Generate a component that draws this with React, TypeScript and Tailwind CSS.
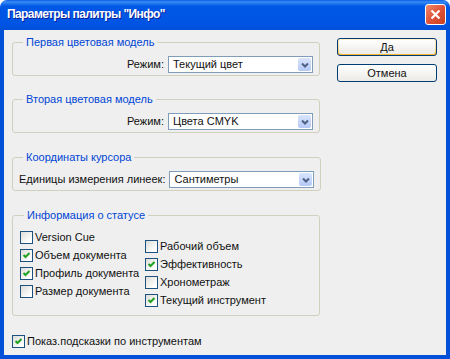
import React from "react";

// Small XP style checkbox
const Check: React.FC<{ checked?: boolean; label: string }> = ({ checked, label }) => (
  <div className="flex h-[18px] items-center gap-[2px] whitespace-nowrap">
    <div className="flex h-[13px] w-[13px] shrink-0 items-center justify-center border border-[#1c5180] bg-[linear-gradient(135deg,#dcdcd7,#ffffff_80%)]">
      {checked && (
        <svg width="9" height="9" viewBox="0 0 9 9">
          <path d="M1.5 4 L3.5 6 L7.5 2" fill="none" stroke="#21a121" strokeWidth="2" />
        </svg>
      )}
    </div>
    <span>{label}</span>
  </div>
);

const Select: React.FC<{ value: string }> = ({ value }) => (
  <div className="flex h-[17px] w-[145px] shrink-0 items-center border border-[#7f9db9] bg-white">
    <span className="flex-1 pl-[4px]">{value}</span>
    <div className="m-[1px] flex h-[13px] w-[13px] items-center justify-center rounded-[2px] bg-[linear-gradient(#d9e5fd,#b4c9f6)]">
      <svg width="8" height="6" viewBox="0 0 8 6">
        <path d="M1 1.5 L4 4.5 L7 1.5" fill="none" stroke="#4d6185" strokeWidth="2" />
      </svg>
    </div>
  </div>
);

const Group: React.FC<{ title: string; className?: string; children: React.ReactNode }> = ({
  title,
  className,
  children,
}) => (
  <fieldset className={"rounded-[3px] border border-[#d0d0bf] px-[6px] " + (className ?? "")}>
    <legend className="ml-[4px] px-[3px] leading-[14px] text-[#0046d5]">{title}</legend>
    {children}
  </fieldset>
);

const Row: React.FC<{ label: string; value: string }> = ({ label, value }) => (
  <div className="flex items-center justify-end gap-[4px] pt-[7px] pb-[2px] whitespace-nowrap">
    <span>{label}</span>
    <Select value={value} />
  </div>
);

export default function App() {
  return (
    <div className="h-[359px] w-[450px] bg-white font-['Liberation_Sans',Arial,sans-serif] text-[11px] text-[#111]">
      <div className="flex h-full flex-col rounded-t-[7px] bg-[linear-gradient(#0a5ee8_0px,#3a8cf3_2px,#0058e6_6px,#0054e3_24px,#0050d8_30px)]">
        {/* title bar */}
        <div className="flex h-[30px] shrink-0 items-center justify-between pl-[7px] pr-[4px] pb-[2px]">
          <span className="text-[12px] font-bold tracking-[-0.6px] text-white [text-shadow:1px_1px_#0a1f9a]">
            Параметры палитры "Инфо"
          </span>
          <div className="flex h-[21px] w-[21px] items-center justify-center rounded-[3px] border border-white bg-[linear-gradient(135deg,#f08a6a,#e0533a_50%,#c8401f)]">
            <svg width="11" height="11" viewBox="0 0 11 11">
              <path d="M1.5 1.5 L9.5 9.5 M9.5 1.5 L1.5 9.5" stroke="white" strokeWidth="2.2" />
            </svg>
          </div>
        </div>

        {/* body */}
        <div className="mx-[4px] mb-[4px] flex flex-1 flex-col bg-[#efefef] pt-[5px] pl-[8px]">
          <div className="flex">
            <div className="flex w-[308px] flex-col">
              <Group title="Первая цветовая модель">
                <Row label="Режим:" value="Текущий цвет" />
              </Group>
              <Group title="Вторая цветовая модель" className="mt-[16px]">
                <Row label="Режим:" value="Цвета CMYK" />
              </Group>
              <Group title="Координаты курсора" className="mt-[17px]">
                <Row label="Единицы измерения линеек:" value="Сантиметры" />
              </Group>
              <Group title="Информация о статусе" className="mt-[17px] pl-[7px]">
                <div className="flex pb-[6px]">
                  <div className="flex w-[125px] flex-col pt-[6px]">
                    <Check label="Version Cue" />
                    <Check checked label="Объем документа" />
                    <Check checked label="Профиль документа" />
                    <Check label="Размер документа" />
                  </div>
                  <div className="flex flex-col pt-[15px]">
                    <Check label="Рабочий объем" />
                    <Check checked label="Эффективность" />
                    <Check label="Хронометраж" />
                    <Check checked label="Текущий инструмент" />
                  </div>
                </div>
              </Group>
            </div>

            <div className="ml-[17px] flex flex-col gap-[8px] pt-[3px]">
              <button className="h-[18px] w-[100px] rounded-[3px] border border-[#003c74] bg-[linear-gradient(#fff0cf,#fdd889_60%,#f8b330)] p-[1px]">
                <div className="flex h-full w-full items-center justify-center rounded-[2px] bg-[linear-gradient(#ffffff,#ecebe6)] leading-none">
                  Да
                </div>
              </button>
              <button className="flex h-[18px] w-[100px] items-center justify-center rounded-[3px] border border-[#003c74] bg-[linear-gradient(#ffffff,#ecebe6)] leading-none">
                Отмена
              </button>
            </div>
          </div>

          <div className="mt-[16px]">
            <Check checked label="Показ.подсказки по инструментам" />
          </div>
        </div>
      </div>
    </div>
  );
}
